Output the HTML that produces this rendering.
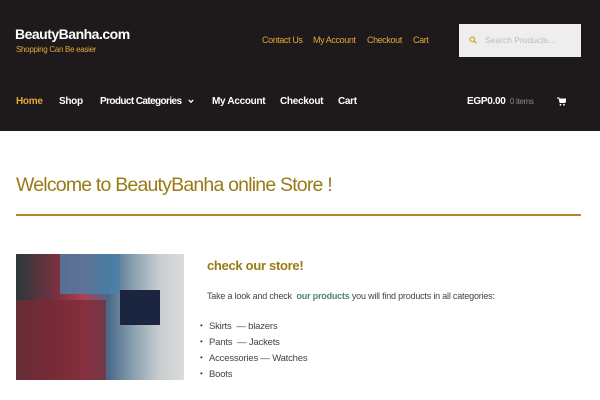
<!DOCTYPE html>
<html><head><style>
*{margin:0;padding:0;box-sizing:border-box}
body{width:600px;height:400px;background:#fff;font-family:"Liberation Sans",sans-serif;position:relative;overflow:hidden}
.a{position:absolute;white-space:nowrap}
#hd{position:absolute;left:0;top:0;width:600px;height:131px;background:#1e191a}
.nav{font-size:10px;font-weight:bold;color:#fff;top:96px;letter-spacing:-0.3px}
.top{font-size:9px;color:#e0a83a;top:35px;letter-spacing:-0.4px}
li{position:absolute;left:209px;font-size:9.5px;color:#444;list-style:none;white-space:nowrap;letter-spacing:-0.2px}
li:before{content:"•";position:absolute;left:-9px;font-size:8px}
</style></head><body>
<div id="hd"></div>
<div class="a" style="left:15px;top:26px;font-size:14px;font-weight:bold;color:#fff;letter-spacing:-0.5px">BeautyBanha.com</div>
<div class="a" style="left:16px;top:45px;font-size:8px;color:#e0a83a;letter-spacing:-0.3px">Shopping Can Be easier</div>
<div class="a top" style="left:262px">Contact Us</div>
<div class="a top" style="left:313px">My Account</div>
<div class="a top" style="left:367px">Checkout</div>
<div class="a top" style="left:413px">Cart</div>
<div class="a" style="left:459px;top:24px;width:122px;height:33px;background:#eeeeee"></div>
<svg class="a" style="left:469px;top:36px" width="8" height="8" viewBox="0 0 8 8"><circle cx="3.3" cy="3.3" r="2.3" fill="none" stroke="#d9a53a" stroke-width="1.3"/><line x1="5" y1="5" x2="7.3" y2="7.3" stroke="#d9a53a" stroke-width="1.4"/></svg>
<div class="a" style="left:485px;top:35px;font-size:8.5px;color:#bbb">Search Products…</div>
<div class="a nav" style="left:16px;color:#e0a83a">Home</div>
<div class="a nav" style="left:59px">Shop</div>
<div class="a nav" style="left:100px;letter-spacing:-0.6px">Product Categories</div>
<svg class="a" style="left:188px;top:99px" width="6" height="5" viewBox="0 0 6 5"><path d="M0.8 1l2.2 2.2L5.2 1" fill="none" stroke="#fff" stroke-width="1.3"/></svg>
<div class="a nav" style="left:212px">My Account</div>
<div class="a nav" style="left:280px">Checkout</div>
<div class="a nav" style="left:338px">Cart</div>
<div class="a nav" style="left:467px">EGP0.00 <span style="font-weight:normal;color:#888;font-size:8px">&nbsp;0 items</span></div>
<svg class="a" style="left:557px;top:97px" width="9" height="9" viewBox="0 0 9 9"><path d="M0 1h2l1 4.5h5l1-3.5H2.5" fill="#fff" stroke="#fff" stroke-width="1"/><circle cx="3.5" cy="7.8" r="0.9" fill="#fff"/><circle cx="7" cy="7.8" r="0.9" fill="#fff"/></svg>
<div class="a" style="left:16px;top:174px;font-size:19.5px;color:#9a7a15;letter-spacing:-0.8px">Welcome to BeautyBanha online Store !</div>
<div class="a" style="left:16px;top:214px;width:565px;height:2px;background:#b0882a"></div>
<div class="a" style="left:16px;top:254px;width:168px;height:126px;background:linear-gradient(90deg,#2a3a3a 0%,#7a3040 25%,#b04050 40%,#4a6a8a 55%,#8aa0b0 70%,#c8cdd0 85%,#dcdcd8 100%)"></div>
<div class="a" style="left:60px;top:254px;width:60px;height:40px;background:#4a7fa8;opacity:.8"></div>
<div class="a" style="left:120px;top:290px;width:40px;height:35px;background:#1c2540"></div>
<div class="a" style="left:16px;top:300px;width:90px;height:80px;background:#7a2a35;opacity:.75"></div>
<div class="a" style="left:207px;top:258px;font-size:13px;font-weight:bold;color:#9a7a15;letter-spacing:-0.3px">check our store!</div>
<div class="a" style="left:207px;top:291px;font-size:9px;color:#444;letter-spacing:-0.2px">Take a look and check &nbsp;<b style="color:#4a8a6a">our products</b> you will find products in all categories:</div>
<ul>
<li style="top:321px">Skirts &nbsp;— blazers</li>
<li style="top:337px">Pants &nbsp;— Jackets</li>
<li style="top:353px">Accessories — Watches</li>
<li style="top:369px">Boots</li>
</ul>
</body></html>
